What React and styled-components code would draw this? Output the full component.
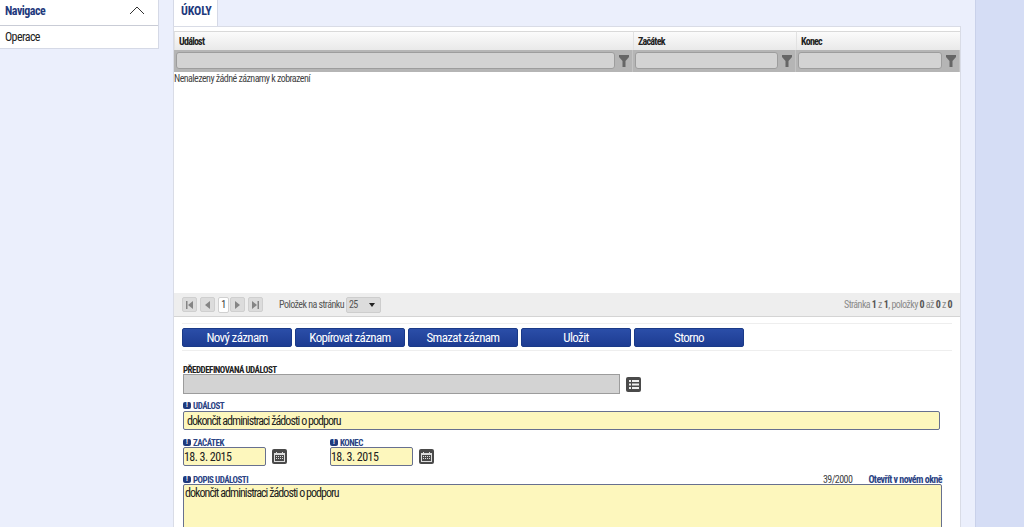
import React from 'react';
import styled, { createGlobalStyle } from 'styled-components';

const Global = createGlobalStyle`
  html, body { margin: 0; padding: 0; height: 527px; overflow: hidden; background: #ebeffc; }
  body { font-family: "Roboto Condensed", "Liberation Sans Narrow", Roboto, sans-serif; font-stretch: condensed; font-size: 10px; letter-spacing: -0.55px; color: #333; }
  * { box-sizing: border-box; }
`;
const Page = styled.div`display: flex; height: 527px; overflow: hidden; background: #ebeffc;`;
const Sidebar = styled.aside`width: 159px; flex: none; margin-right: 14px;`;
const NavCard = styled.nav`background: #fff; border-right: 1px solid #d5d9e6; border-bottom: 1px solid #d5d9e6;`;
const NavHeader = styled.div`height: 26px; padding: 0 13px 4px 5px; display: flex; align-items: center; justify-content: space-between; border-bottom: 1px solid #c9ccd6; font-size: 12px; letter-spacing: -0.5px; font-weight: 700; color: #1f3a7d;`;
const NavItem = styled.div`height: 22px; padding-left: 5px; display: flex; align-items: center; font-size: 12px; letter-spacing: -0.6px; color: #222;`;
const Main = styled.main`width: 803px; flex: none; border-right: 1px solid #c9d1ea; padding-right: 14px;`;
const RightStrip = styled.div`flex: 1; background: #d5ddf5;`;
const TabBar = styled.div`height: 26px; display: flex;`;
const Tab = styled.div`width: 45px; height: 26px; background: #fff; border-left: 1px solid #d5d9e6; border-right: 1px solid #d5d9e6; padding: 0 0 4px 7px; display: flex; align-items: center; font-size: 12px; letter-spacing: -0.1px; font-weight: 700; color: #1f3a7d;`;
const Panel = styled.section`background: #fff; border: 1px solid #d9dce6; border-bottom: 0; padding-top: 4px; height: 501px; overflow: hidden;`;
const Grid = styled.div`display: grid; grid-template-columns: 459px 163px 164px;`;
const HeadCell = styled.div`height: 19px; padding-left: 4px; display: flex; align-items: center; font-size: 10px; letter-spacing: -0.75px; font-weight: 700; color: #222; background: linear-gradient(#fbfbfb, #e9e9e9); border-top: 1px solid #d9d9d9; border-left: 1px solid #e2e2e2;`;
const FilterCell = styled.div`height: 22px; background: #b5b5b5; padding: 2px 3px 3px 2px; display: flex; align-items: center; gap: 4px; border-right: 1px solid #c4c4c4;`;
const FilterInput = styled.div`flex: 1; height: 17px; background: #d3d3d3; border: 1px solid #9d9d9d; border-radius: 3px;`;
const FunnelIcon = styled.svg`width: 10px; height: 12px; flex: none; fill: #666;`;
const Empty = styled.div`height: 221px; font-size: 10px; padding-top: 1px; color: #444; line-height: 12px;`;
const Pager = styled.div`height: 24px; background: #eeeeee; border-bottom: 1px solid #d4d4d4; padding: 0 8px; display: flex; align-items: center; font-size: 10px; color: #555;`;
const PageBtn = styled.div`width: 15px; height: 15px; margin-right: 3px; background: #dcdcdc; border: 1px solid #cfcfcf; border-radius: 2px; display: flex; align-items: center; justify-content: center;`;
const PageNum = styled.div`width: 11px; height: 16px; margin-right: 1px; background: #fff; border: 1px solid #d0d0d0; border-radius: 2px; display: flex; align-items: center; justify-content: center; font-size: 10px; color: #333;`;
const PageArrow = styled.svg`width: 9px; height: 8px; fill: #858585;`;
const PageLabel = styled.span`margin-left: 13px; margin-right: 2px;`;
const SizeSelect = styled.div`width: 35px; height: 16px; background: #dcdcdc; border: 1px solid #cdcdcd; border-radius: 2px; padding: 0 5px 0 2px; display: flex; align-items: center; justify-content: space-between;`;
const Caret = styled.span`width: 0; height: 0; border: 3px solid transparent; border-top: 4px solid #222; border-bottom: 0;`;
const PagerInfo = styled.div`margin-left: auto; color: #8a8a8a; b { color: #555; font-weight: 700; }`;
const Toolbar = styled.div`margin: 6px 8px 0; padding: 4px 0; display: flex; gap: 3px; border-top: 1px solid #eeeeee; border-bottom: 1px solid #eeeeee; height: 28px;`;
const Button = styled.button`width: 110px; height: 19px; padding: 0; border: 1px solid #1a3a88; border-radius: 2px; background: linear-gradient(#2b4ea8, #1d3c92); color: #fff; font: inherit; font-size: 13px; letter-spacing: -0.65px; display: flex; align-items: center; justify-content: center;`;
const Form = styled.div`padding: 13px 0 0 9px;`;
const Label = styled.label`display: flex; align-items: center; gap: 2px; height: 11px; font-size: 9px; letter-spacing: -0.5px; font-weight: 700; color: ${p => p.$required ? '#2b4383' : '#222'};`;
const Bang = styled.span`width: 8px; height: 7px; background: #1f3a7d; border-radius: 2px; color: #fff; font-size: 7px; font-weight: 700; line-height: 7px; text-align: center; letter-spacing: 0;`;
const Row = styled.div`display: flex; align-items: center; gap: 6px; margin-top: -1px;`;
const ReadOnly = styled.div`width: 437px; height: 20px; background: #d3d3d3; border: 1px solid #9c9c9c;`;
const IconBtn = styled.div`width: 15px; height: 15px; background: #4a4a4a; border-radius: 2px; display: flex; align-items: center; justify-content: center;`;
const Field = styled.div`margin-top: ${p => p.$top || 0}px;`;
const Input = styled.div`width: ${p => p.$w}px; height: 19px; background: #fdf7bd; border: 1px solid #67708f; border-radius: 2px; padding-left: ${p => p.$pad}px; display: flex; align-items: center; font-size: 12px; letter-spacing: ${p => p.$spacing}px; color: #222;`;
const DateRow = styled.div`display: flex; margin-top: 7px;`;
const DateField = styled.div`width: 147px;`;
const LabelRow = styled.div`display: flex; align-items: center; justify-content: space-between; width: 759px;`;
const Meta = styled.div`display: flex; gap: 16px; font-size: 10px; color: #444;`;
const OpenLink = styled.a`color: #2b4383; font-weight: 700;`;
const TextArea = styled.div`width: 759px; height: 60px; margin-top: -1px; background: #fdf7bd; border: 1px solid #67708f; border-radius: 2px; padding: 1px 1px 0; font-size: 12px; letter-spacing: -0.95px; line-height: 15px; color: #222;`;

const Funnel = () => <FunnelIcon viewBox="0 0 10 12"><path d="M0 0h10v2L6.500 6v6h-3V6L0 2z" /></FunnelIcon>;
const Arrow = ({ d }) => <PageArrow viewBox="0 0 9 8"><path d={d} /></PageArrow>;
const Cal = () => (
  <svg width="11" height="10" viewBox="0 0 11 10"><path fill="#ddd" d="M0 1h2V0h1v1h5V0h1v1h2v9H0zM1 3v6h9V3z" /><path fill="#ddd" d="M2 4h1v1H2zM4 4h1v1H4zM6 4h1v1H6zM8 4h1v1H8zM2 6h1v1H2zM4 6h1v1H4zM6 6h1v1H6zM8 6h1v1H8z" /></svg>
);
const List = () => (
  <svg width="10" height="9" viewBox="0 0 10 9"><path fill="#eee" d="M0 0h2v2H0zM3 0h7v2H3zM0 3.500h2v2H0zM3 3.500h7v2H3zM0 7h2v2H0zM3 7h7v2H3z" /></svg>
);

export default function App() {
  return (
    <Page>
      <Global />
      <Sidebar>
        <NavCard>
          <NavHeader>
            Navigace
            <svg width="16" height="9" viewBox="0 0 16 9"><path d="M1 8l7-7 7 7" fill="none" stroke="#333" strokeWidth="1" /></svg>
          </NavHeader>
          <NavItem>Operace</NavItem>
        </NavCard>
      </Sidebar>
      <Main>
        <TabBar><Tab>ÚKOLY</Tab></TabBar>
        <Panel>
          <Grid>
            <HeadCell>Událost</HeadCell>
            <HeadCell>Začátek</HeadCell>
            <HeadCell>Konec</HeadCell>
            <FilterCell><FilterInput /><Funnel /></FilterCell>
            <FilterCell><FilterInput /><Funnel /></FilterCell>
            <FilterCell><FilterInput /><Funnel /></FilterCell>
          </Grid>
          <Empty>Nenalezeny žádné záznamy k zobrazení</Empty>
          <Pager>
            <PageBtn><Arrow d="M1 0h1.500v8H1zM8 0v8L3 4z" /></PageBtn>
            <PageBtn><Arrow d="M7 0v8L2 4z" /></PageBtn>
            <PageNum>1</PageNum>
            <PageBtn><Arrow d="M2 0v8l5-4z" /></PageBtn>
            <PageBtn><Arrow d="M1 0v8l5-4zM6.500 0H8v8H6.500z" /></PageBtn>
            <PageLabel>Položek na stránku</PageLabel>
            <SizeSelect>25<Caret /></SizeSelect>
            <PagerInfo>Stránka <b>1</b> z <b>1</b>, položky <b>0</b> až <b>0</b> z <b>0</b></PagerInfo>
          </Pager>
          <Toolbar>
            <Button>Nový záznam</Button>
            <Button>Kopírovat záznam</Button>
            <Button>Smazat záznam</Button>
            <Button>Uložit</Button>
            <Button>Storno</Button>
          </Toolbar>
          <Form>
            <Label>PŘEDDEFINOVANÁ UDÁLOST</Label>
            <Row><ReadOnly /><IconBtn><List /></IconBtn></Row>
            <Field $top={6}>
              <Label $required><Bang>!</Bang>UDÁLOST</Label>
              <Input $w={757} $pad={3} $spacing={-0.95}>dokončit administraci žádosti o podporu</Input>
            </Field>
            <DateRow>
              <DateField>
                <Label $required><Bang>!</Bang>ZAČÁTEK</Label>
                <Row><Input $w={83} $pad={0} $spacing={-0.55}>18. 3. 2015</Input><IconBtn><Cal /></IconBtn></Row>
              </DateField>
              <DateField>
                <Label $required><Bang>!</Bang>KONEC</Label>
                <Row><Input $w={83} $pad={0} $spacing={-0.55}>18. 3. 2015</Input><IconBtn><Cal /></IconBtn></Row>
              </DateField>
            </DateRow>
            <Field $top={8}>
              <LabelRow>
                <Label $required><Bang>!</Bang>POPIS UDÁLOSTI</Label>
                <Meta><span>39/2000</span><OpenLink>Otevřít v novém okně</OpenLink></Meta>
              </LabelRow>
              <TextArea>dokončit administraci žádosti o podporu</TextArea>
            </Field>
          </Form>
        </Panel>
      </Main>
      <RightStrip />
    </Page>
  );
}
